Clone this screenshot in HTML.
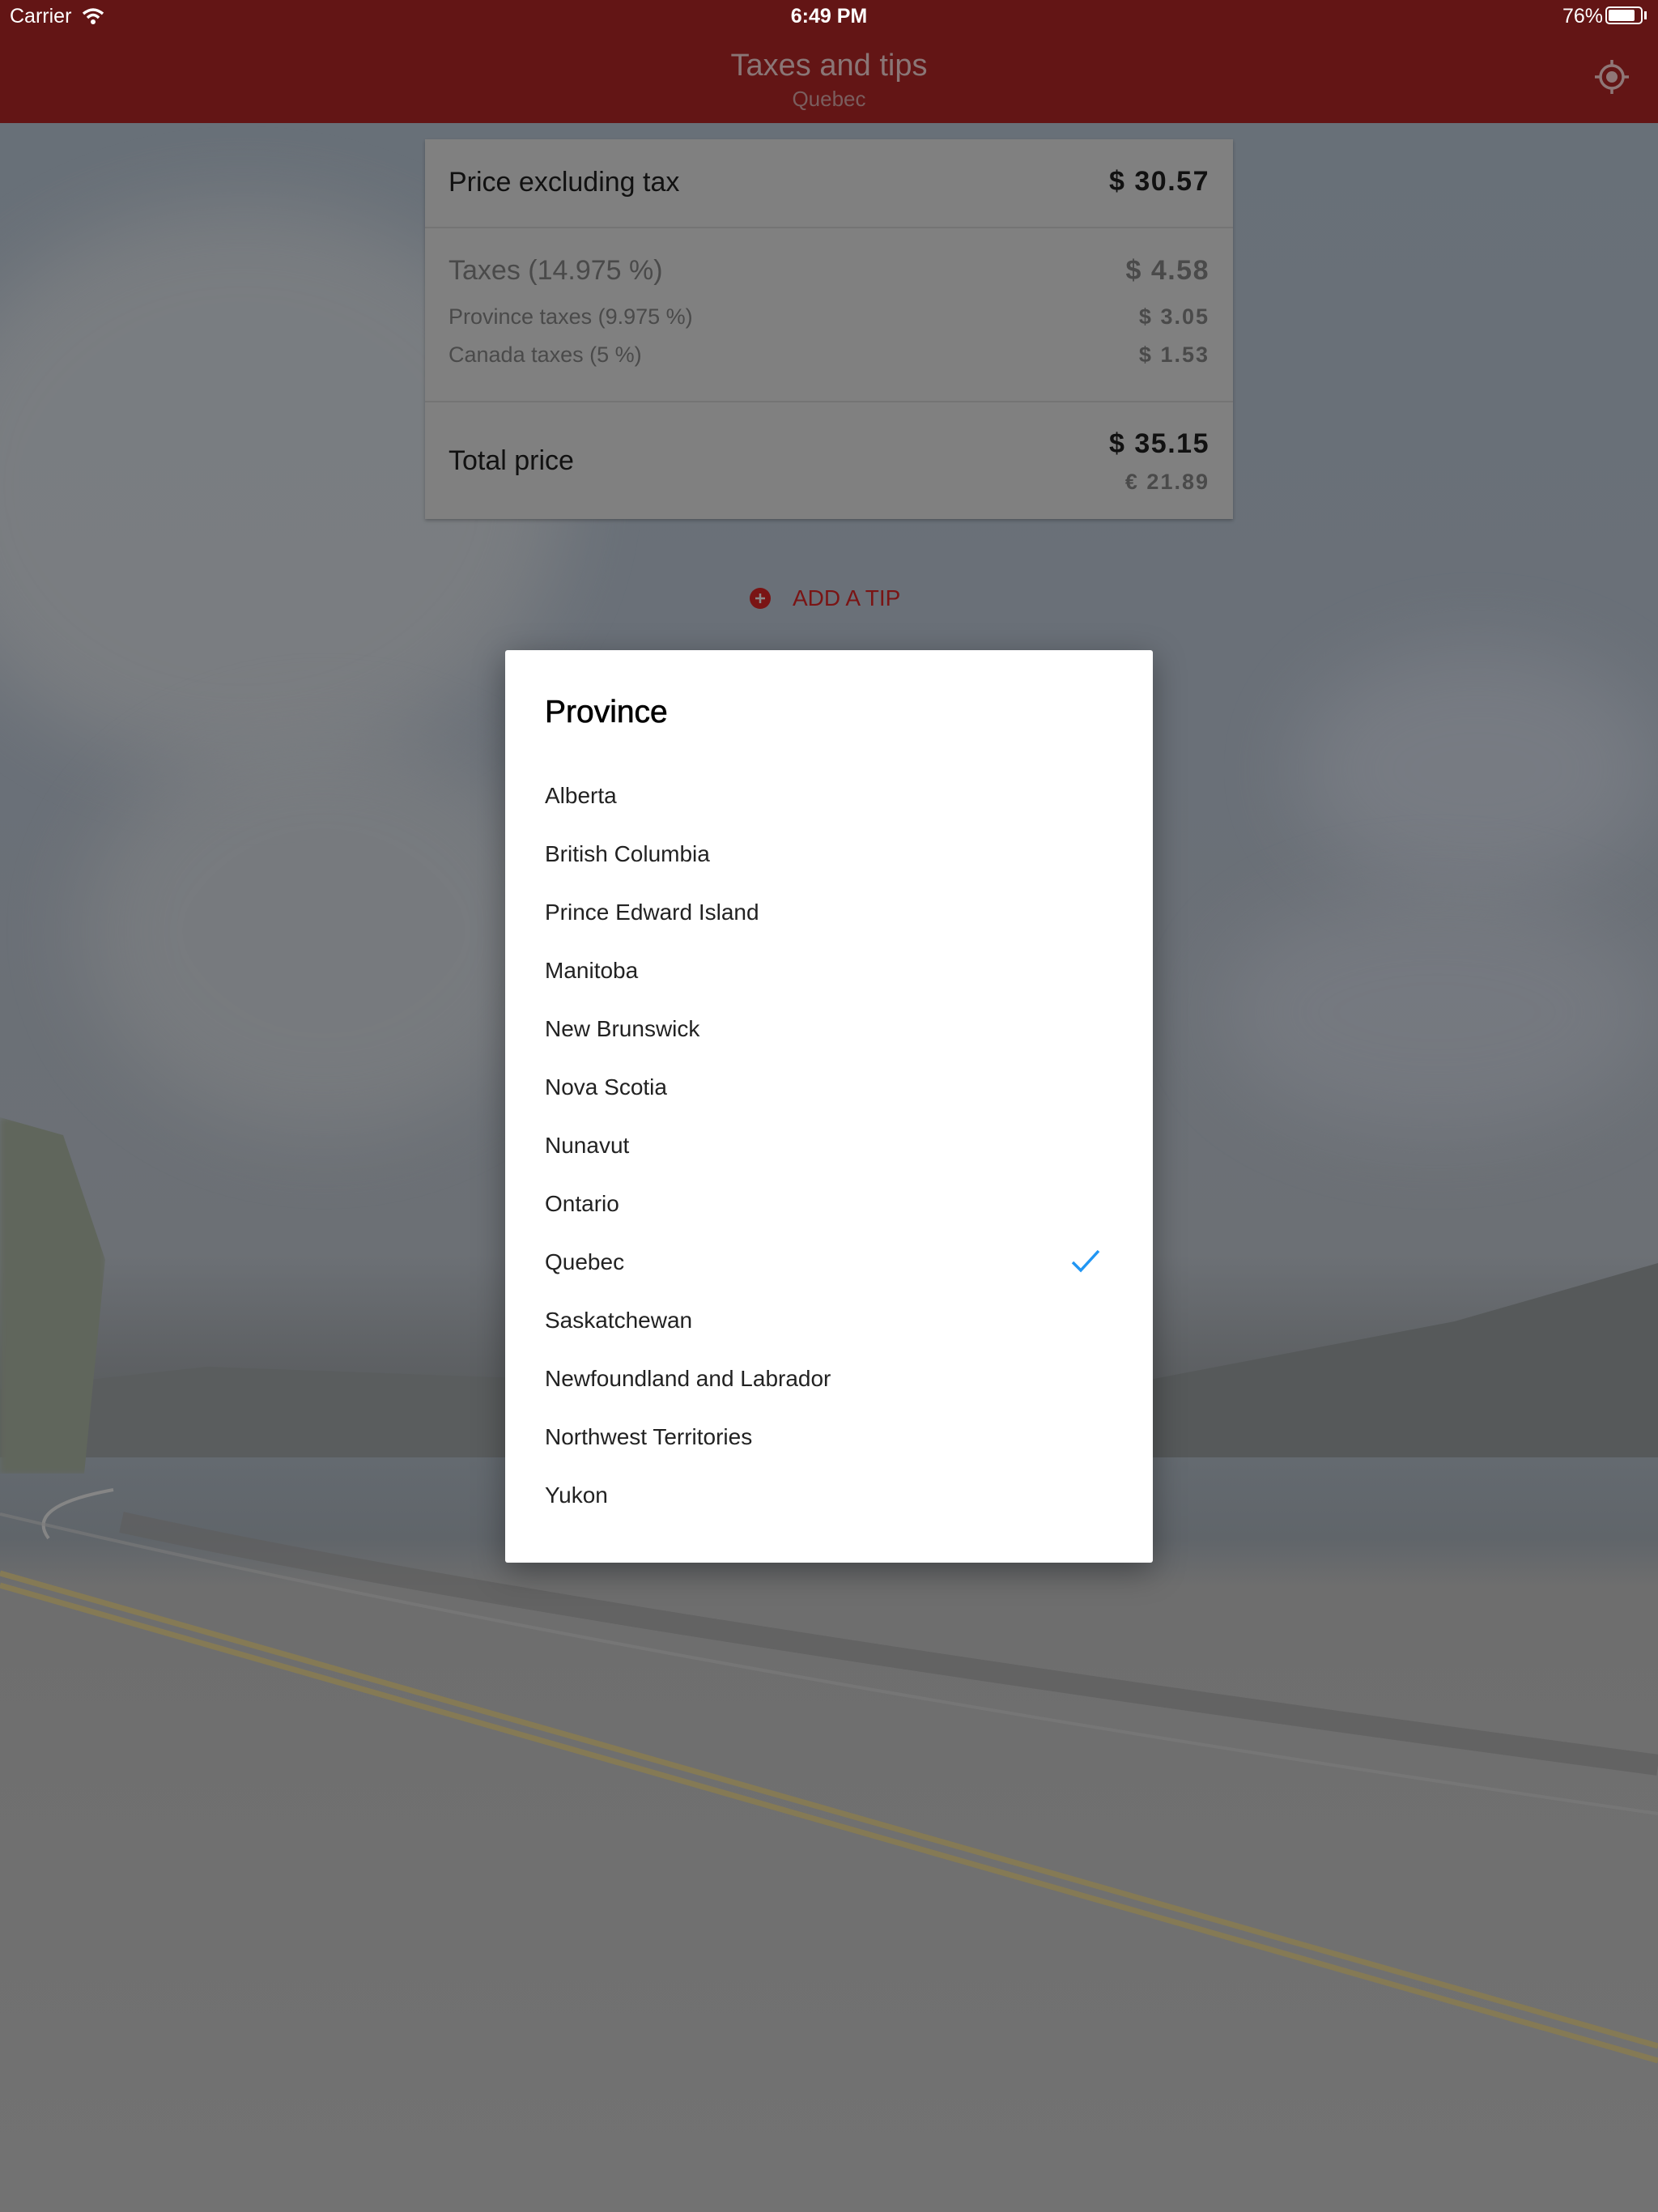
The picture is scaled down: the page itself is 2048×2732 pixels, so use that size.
<!DOCTYPE html>
<html><head><meta charset="utf-8">
<style>
*{margin:0;padding:0;box-sizing:border-box}
html,body{width:2048px;height:2732px;overflow:hidden}
body{position:relative;font-family:"Liberation Sans",sans-serif;background:#6b7079}
.bg{position:absolute;left:0;top:0;width:2048px;height:2732px;
background:linear-gradient(180deg,#687078 0px,#6a7078 900px,#6c7075 1550px,#5e6164 1680px,#55585a 1790px,#646a70 1800px,#60656a 1900px,#6e6e6e 1960px,#727272 2732px)}
.cloud{position:absolute;border-radius:50%;filter:blur(50px);opacity:.6}
.nav{position:absolute;left:0;top:0;width:2048px;height:152px;background:#631515}
.sb{position:absolute;top:6px;font-size:25px;color:#fff}
.title{position:absolute;top:60px;width:2048px;text-align:center;font-size:38px;color:#8a7676}
.sub{position:absolute;top:107px;width:2048px;text-align:center;font-size:26px;color:#7a5e5e}
.card{position:absolute;left:525px;top:172px;width:998px;height:469px;background:#808080;box-shadow:0 2px 4px rgba(0,0,0,.25)}
.card .t{position:absolute;left:29px;white-space:nowrap}
.card .v{position:absolute;right:29px;white-space:nowrap;letter-spacing:2px;font-weight:bold}
.line{position:absolute;left:0;width:998px;height:2px;background:#747474}
.dlg{position:absolute;left:624px;top:803px;width:800px;height:1127px;background:#fff;border-radius:3px;box-shadow:0 10px 40px rgba(0,0,0,.35)}
.dlg h2{position:absolute;left:49px;top:55px;font-size:39px;font-weight:normal;color:#000;-webkit-text-stroke:.6px #000}
.it{position:absolute;left:49px;font-size:28px;color:#222}
</style></head><body>
<div class="bg"></div>
<div class="cloud" style="left:-100px;top:250px;width:800px;height:700px;background:#858687"></div>
<div class="cloud" style="left:100px;top:900px;width:600px;height:500px;background:#808284"></div>
<div class="cloud" style="left:1600px;top:800px;width:450px;height:300px;background:#80838a"></div>
<div class="cloud" style="left:1500px;top:1100px;width:550px;height:300px;background:#7c7f86"></div>
<div style="position:absolute;left:1420px;top:1560px;width:628px;height:240px;background:#56595a;clip-path:polygon(0 60%,60% 30%,100% 0,100% 100%,0 100%)"></div>
<div style="position:absolute;left:0;top:1660px;width:640px;height:140px;background:#5a5d5e;clip-path:polygon(0 40%,40% 20%,100% 30%,100% 100%,0 100%)"></div>
<div style="position:absolute;left:0;top:1380px;width:130px;height:440px;background:#60665c;clip-path:polygon(0 0,60% 5%,100% 40%,80% 100%,0 100%);filter:blur(4px)"></div>
<svg style="position:absolute;left:0;top:0" width="2048" height="2732">
<path d="M0 1943 L2048 2527" stroke="#857a55" stroke-width="7" fill="none"/>
<path d="M0 1958 L2048 2545" stroke="#857a55" stroke-width="7" fill="none"/>
<path d="M60 1900 Q30 1860 140 1840" stroke="#858585" stroke-width="4" fill="none"/>
<path d="M150 1880 Q700 2000 2048 2180" stroke="#5e5e5e" stroke-width="26" fill="none" opacity=".7"/>
<path d="M0 1870 Q800 2060 2048 2240" stroke="#7c7c7c" stroke-width="4" fill="none" opacity=".6"/>
</svg>
<div class="nav">
<div class="sb" style="left:12px">Carrier</div>
<svg style="position:absolute;left:100px;top:8px" width="30" height="24" viewBox="0 0 30 24"><path d="M3 9 Q15 -1 27 9" stroke="#fff" stroke-width="3.5" fill="none"/><path d="M8 14 Q15 7 22 14" stroke="#fff" stroke-width="3.5" fill="none"/><circle cx="15" cy="19" r="3" fill="#fff"/></svg>
<div class="sb" style="left:0;width:2048px;text-align:center;font-weight:bold">6:49 PM</div>
<div class="sb" style="left:1930px">76%</div>
<div style="position:absolute;left:1983px;top:8px;width:46px;height:22px;border:2px solid #fff;border-radius:5px"><div style="margin:2px;width:32px;height:14px;background:#fff;border-radius:2px"></div></div>
<div style="position:absolute;left:2031px;top:14px;width:3px;height:10px;background:#fff"></div>
<div class="title">Taxes and tips</div>
<div class="sub">Quebec</div>
<svg style="position:absolute;left:1968px;top:72px" width="46" height="46" viewBox="0 0 46 46"><circle cx="23" cy="23" r="14" stroke="#8f7777" stroke-width="3.5" fill="none"/><circle cx="23" cy="23" r="7" fill="#8f7777"/><path d="M23 2V9M23 37V44M2 23H9M37 23H44" stroke="#8f7777" stroke-width="3.5"/></svg>
</div>
<div class="card">
<div class="t" style="top:34px;font-size:34px;color:#111">Price excluding tax</div>
<div class="v" style="top:33px;font-size:34px;color:#111;letter-spacing:1.5px">$ 30.57</div>
<div class="line" style="top:108px"></div>
<div class="t" style="top:143px;font-size:34px;color:#4a4a4a">Taxes (14.975 %)</div>
<div class="v" style="top:143px;font-size:34px;color:#4a4a4a;letter-spacing:1.5px">$ 4.58</div>
<div class="t" style="top:204px;font-size:27px;color:#4a4a4a">Province taxes (9.975 %)</div>
<div class="v" style="top:204px;font-size:27px;color:#4a4a4a">$ 3.05</div>
<div class="t" style="top:251px;font-size:27px;color:#4a4a4a">Canada taxes (5 %)</div>
<div class="v" style="top:251px;font-size:27px;color:#4a4a4a">$ 1.53</div>
<div class="line" style="top:323px"></div>
<div class="t" style="top:378px;font-size:34px;color:#111">Total price</div>
<div class="v" style="top:357px;font-size:34px;color:#111;letter-spacing:1.5px">$ 35.15</div>
<div class="v" style="top:408px;font-size:27px;color:#4a4a4a">€ 21.89</div>
</div>
<svg style="position:absolute;left:925px;top:725px" width="28" height="28" viewBox="0 0 28 28"><circle cx="14" cy="14" r="13" fill="#7a1414"/><path d="M14 8V20M8 14H20" stroke="#888" stroke-width="2.5"/></svg>
<div style="position:absolute;left:979px;top:723px;font-size:28px;color:#7a1414">ADD A TIP</div>
<div class="dlg">
<h2>Province</h2>
<div class="it" style="top:164px">Alberta</div>
<div class="it" style="top:236px">British Columbia</div>
<div class="it" style="top:308px">Prince Edward Island</div>
<div class="it" style="top:380px">Manitoba</div>
<div class="it" style="top:452px">New Brunswick</div>
<div class="it" style="top:524px">Nova Scotia</div>
<div class="it" style="top:596px">Nunavut</div>
<div class="it" style="top:668px">Ontario</div>
<div class="it" style="top:740px">Quebec</div>
<svg style="position:absolute;left:698px;top:738px" width="38" height="34" viewBox="0 0 38 34"><path d="M3 18 L13 28 L35 4" stroke="#2196f3" stroke-width="3.5" fill="none"/></svg>
<div class="it" style="top:812px">Saskatchewan</div>
<div class="it" style="top:884px">Newfoundland and Labrador</div>
<div class="it" style="top:956px">Northwest Territories</div>
<div class="it" style="top:1028px">Yukon</div>
</div>
</body></html>
